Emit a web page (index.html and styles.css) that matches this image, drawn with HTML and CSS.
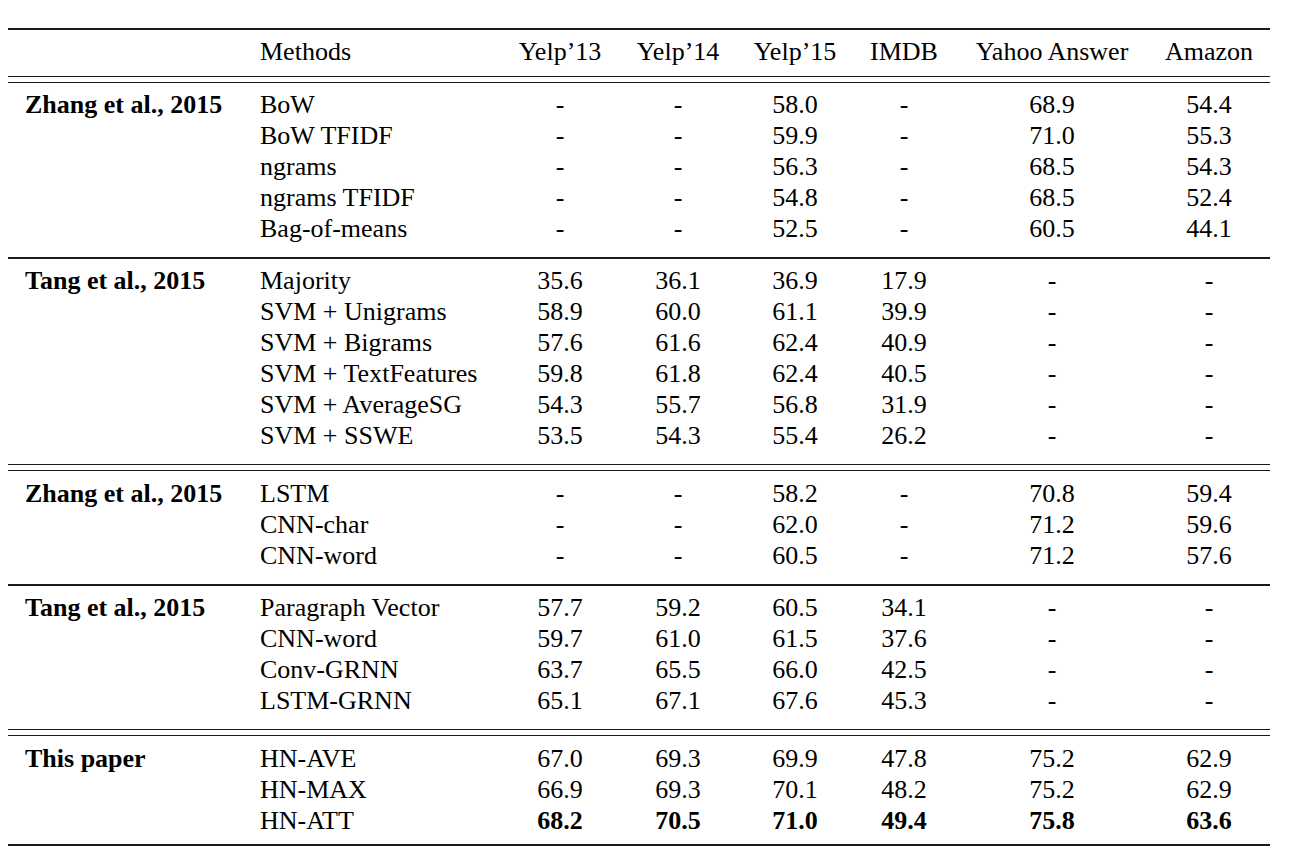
FILE: index.html
```html
<!DOCTYPE html>
<html lang="en">
<head>
<meta charset="utf-8">
<title>Results table</title>
<link rel="stylesheet" href="styles.css">
</head>
<body>
<div class="table">
  <div class="rule thick"></div>
  <div class="row head">
    <span class="group"></span>
    <span class="method">Methods</span>
    <span class="num">Yelp’13</span>
    <span class="num">Yelp’14</span>
    <span class="num">Yelp’15</span>
    <span class="num">IMDB</span>
    <span class="num">Yahoo Answer</span>
    <span class="num">Amazon</span>
  </div>
  <div class="rule double"></div>

  <div class="section">
    <div class="row"><span class="group">Zhang et al., 2015</span><span class="method">BoW</span><span class="num">-</span><span class="num">-</span><span class="num">58.0</span><span class="num">-</span><span class="num">68.9</span><span class="num">54.4</span></div>
    <div class="row"><span class="group"></span><span class="method">BoW TFIDF</span><span class="num">-</span><span class="num">-</span><span class="num">59.9</span><span class="num">-</span><span class="num">71.0</span><span class="num">55.3</span></div>
    <div class="row"><span class="group"></span><span class="method">ngrams</span><span class="num">-</span><span class="num">-</span><span class="num">56.3</span><span class="num">-</span><span class="num">68.5</span><span class="num">54.3</span></div>
    <div class="row"><span class="group"></span><span class="method">ngrams TFIDF</span><span class="num">-</span><span class="num">-</span><span class="num">54.8</span><span class="num">-</span><span class="num">68.5</span><span class="num">52.4</span></div>
    <div class="row"><span class="group"></span><span class="method">Bag-of-means</span><span class="num">-</span><span class="num">-</span><span class="num">52.5</span><span class="num">-</span><span class="num">60.5</span><span class="num">44.1</span></div>
  </div>
  <div class="rule"></div>

  <div class="section">
    <div class="row"><span class="group">Tang et al., 2015</span><span class="method">Majority</span><span class="num">35.6</span><span class="num">36.1</span><span class="num">36.9</span><span class="num">17.9</span><span class="num">-</span><span class="num">-</span></div>
    <div class="row"><span class="group"></span><span class="method">SVM + Unigrams</span><span class="num">58.9</span><span class="num">60.0</span><span class="num">61.1</span><span class="num">39.9</span><span class="num">-</span><span class="num">-</span></div>
    <div class="row"><span class="group"></span><span class="method">SVM + Bigrams</span><span class="num">57.6</span><span class="num">61.6</span><span class="num">62.4</span><span class="num">40.9</span><span class="num">-</span><span class="num">-</span></div>
    <div class="row"><span class="group"></span><span class="method">SVM + TextFeatures</span><span class="num">59.8</span><span class="num">61.8</span><span class="num">62.4</span><span class="num">40.5</span><span class="num">-</span><span class="num">-</span></div>
    <div class="row"><span class="group"></span><span class="method">SVM + AverageSG</span><span class="num">54.3</span><span class="num">55.7</span><span class="num">56.8</span><span class="num">31.9</span><span class="num">-</span><span class="num">-</span></div>
    <div class="row"><span class="group"></span><span class="method">SVM + SSWE</span><span class="num">53.5</span><span class="num">54.3</span><span class="num">55.4</span><span class="num">26.2</span><span class="num">-</span><span class="num">-</span></div>
  </div>
  <div class="rule double"></div>

  <div class="section">
    <div class="row"><span class="group">Zhang et al., 2015</span><span class="method">LSTM</span><span class="num">-</span><span class="num">-</span><span class="num">58.2</span><span class="num">-</span><span class="num">70.8</span><span class="num">59.4</span></div>
    <div class="row"><span class="group"></span><span class="method">CNN-char</span><span class="num">-</span><span class="num">-</span><span class="num">62.0</span><span class="num">-</span><span class="num">71.2</span><span class="num">59.6</span></div>
    <div class="row"><span class="group"></span><span class="method">CNN-word</span><span class="num">-</span><span class="num">-</span><span class="num">60.5</span><span class="num">-</span><span class="num">71.2</span><span class="num">57.6</span></div>
  </div>
  <div class="rule"></div>

  <div class="section">
    <div class="row"><span class="group">Tang et al., 2015</span><span class="method">Paragraph Vector</span><span class="num">57.7</span><span class="num">59.2</span><span class="num">60.5</span><span class="num">34.1</span><span class="num">-</span><span class="num">-</span></div>
    <div class="row"><span class="group"></span><span class="method">CNN-word</span><span class="num">59.7</span><span class="num">61.0</span><span class="num">61.5</span><span class="num">37.6</span><span class="num">-</span><span class="num">-</span></div>
    <div class="row"><span class="group"></span><span class="method">Conv-GRNN</span><span class="num">63.7</span><span class="num">65.5</span><span class="num">66.0</span><span class="num">42.5</span><span class="num">-</span><span class="num">-</span></div>
    <div class="row"><span class="group"></span><span class="method">LSTM-GRNN</span><span class="num">65.1</span><span class="num">67.1</span><span class="num">67.6</span><span class="num">45.3</span><span class="num">-</span><span class="num">-</span></div>
  </div>
  <div class="rule double"></div>

  <div class="section last">
    <div class="row"><span class="group">This paper</span><span class="method">HN-AVE</span><span class="num">67.0</span><span class="num">69.3</span><span class="num">69.9</span><span class="num">47.8</span><span class="num">75.2</span><span class="num">62.9</span></div>
    <div class="row"><span class="group"></span><span class="method">HN-MAX</span><span class="num">66.9</span><span class="num">69.3</span><span class="num">70.1</span><span class="num">48.2</span><span class="num">75.2</span><span class="num">62.9</span></div>
    <div class="row best"><span class="group"></span><span class="method">HN-ATT</span><span class="num">68.2</span><span class="num">70.5</span><span class="num">71.0</span><span class="num">49.4</span><span class="num">75.8</span><span class="num">63.6</span></div>
  </div>
  <div class="rule thick"></div>
</div>
</body>
</html>
```
FILE: styles.css
```css
html, body {
  margin: 0;
  padding: 0;
  background: #ffffff;
}

body {
  font-family: "Liberation Serif", "Times New Roman", serif;
  font-size: 26px;
  color: #000000;
  font-kerning: normal;
}

.table {
  width: 1262px;
  margin-left: 8px;
  padding-top: 28px;
}

.rule {
  height: 1.4px;
  background: #1a1a1a;
}

.rule.thick {
  height: 2px;
}

.rule.double {
  height: 5px;
  background: transparent;
  border-top: 1.4px solid #1a1a1a;
  border-bottom: 1.4px solid #1a1a1a;
}

.row {
  display: grid;
  grid-template-columns: 235px 259px 116px 120px 114px 104px 192px 122px;
  line-height: 31px;
  white-space: nowrap;
}

.row.head {
  padding-top: 5.7px;
  padding-bottom: 9px;
}

.section {
  padding-top: 6.7px;
  padding-bottom: 13px;
}

.section.last {
  padding-bottom: 8px;
}

.group {
  padding-left: 17px;
  font-weight: bold;
}

.method {
  padding-left: 17px;
}

.num {
  text-align: center;
}

.row.best .num {
  font-weight: bold;
}
```
